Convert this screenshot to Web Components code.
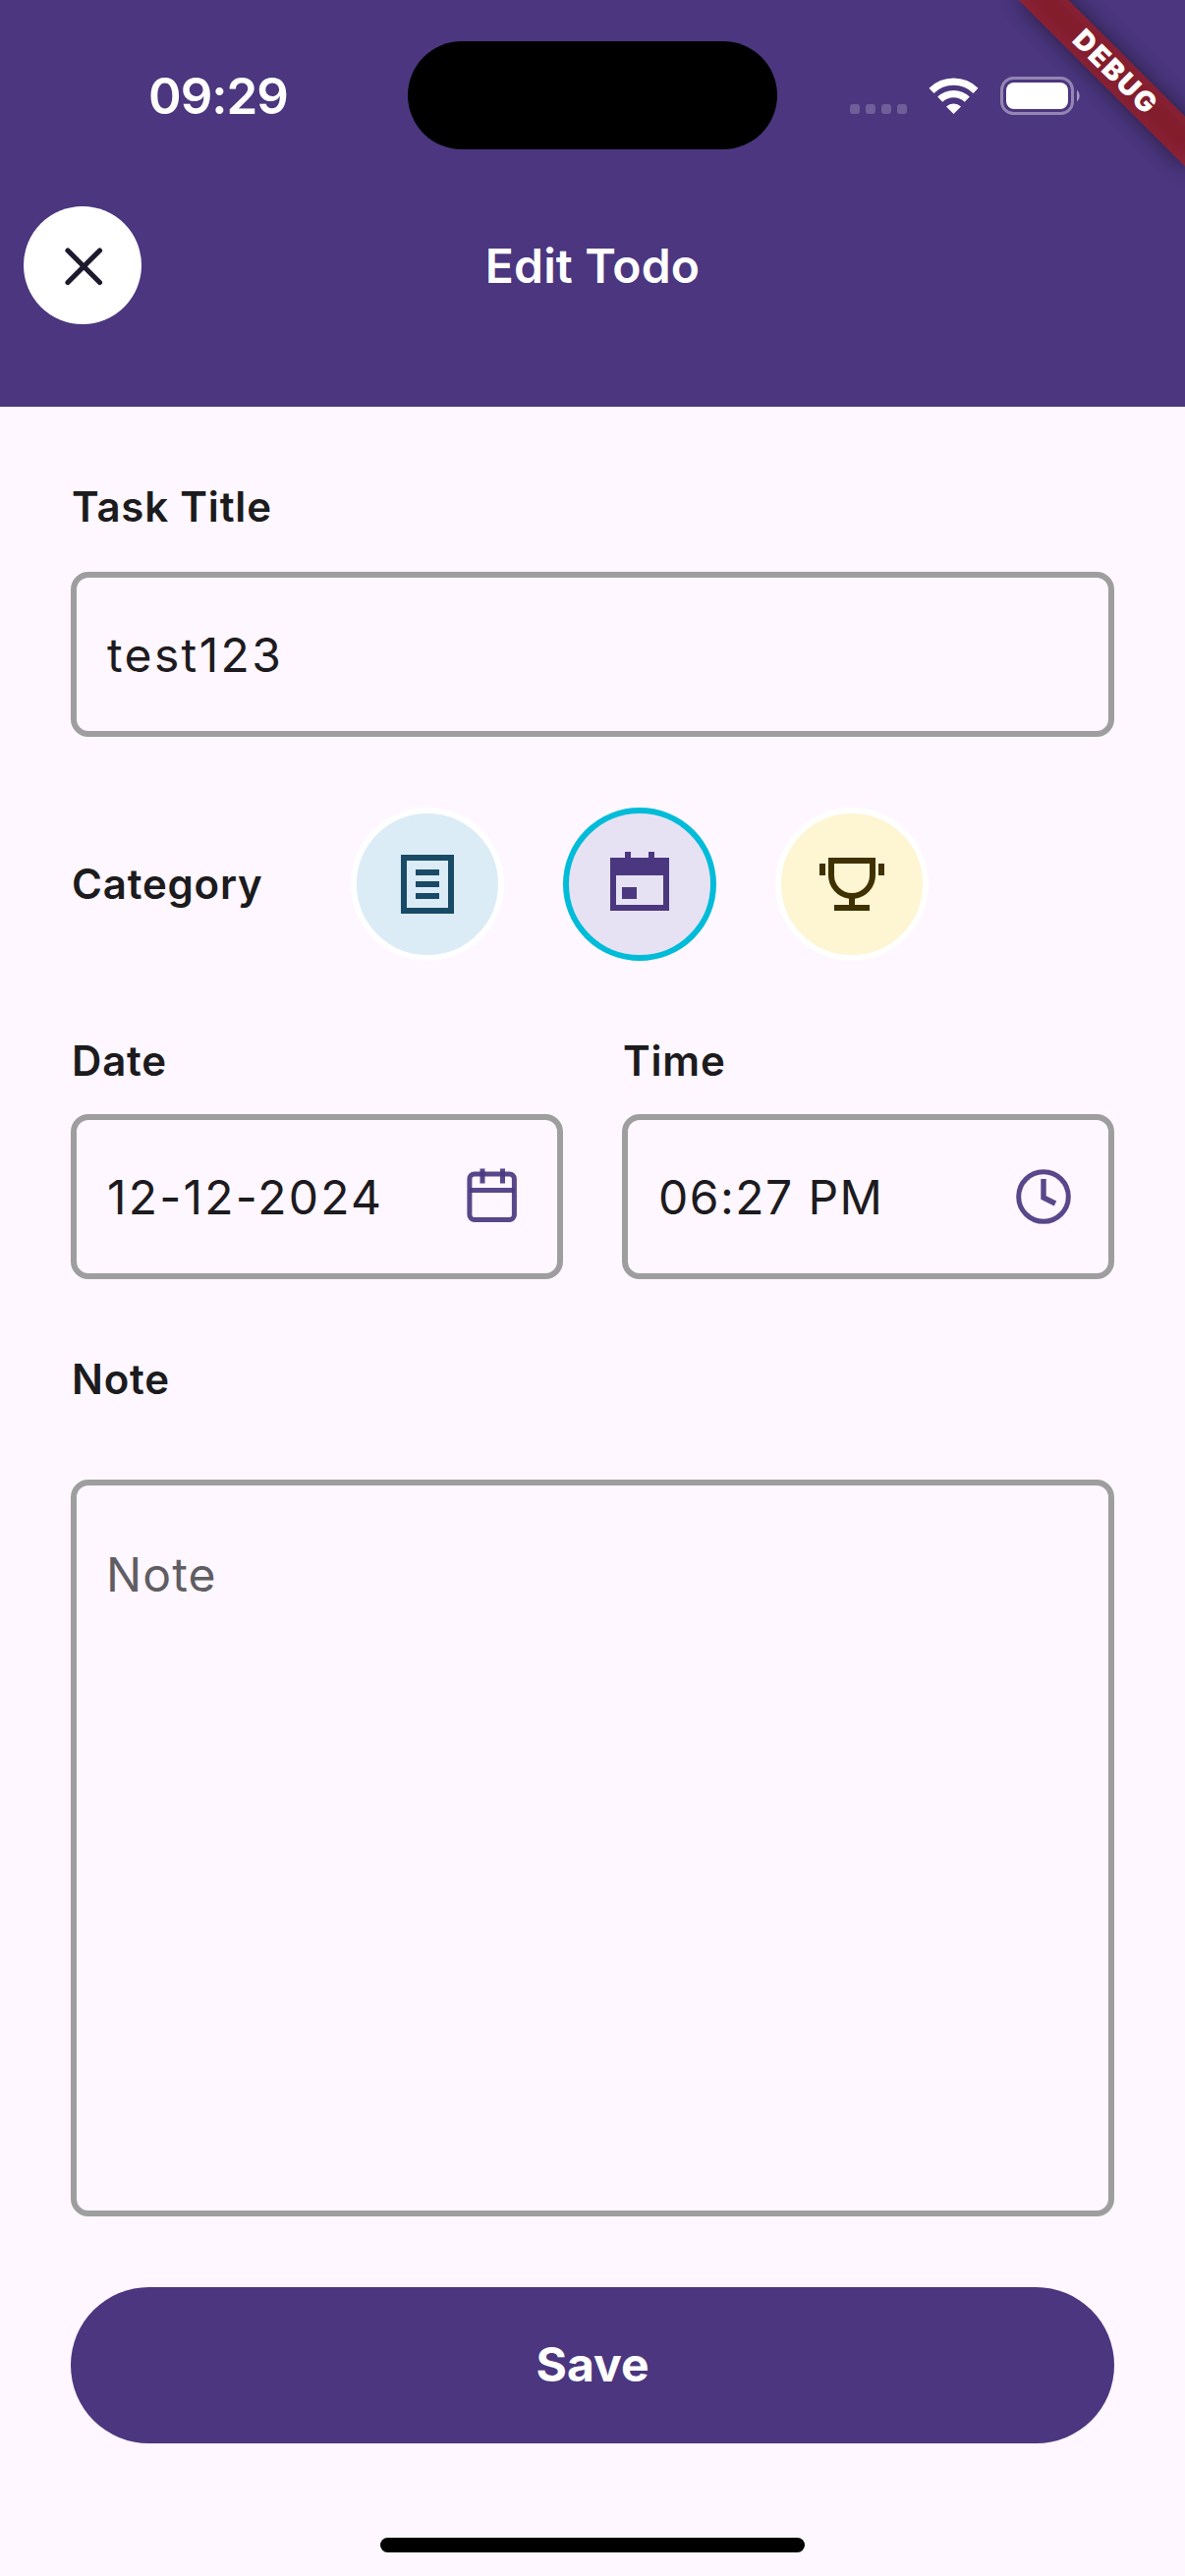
<!DOCTYPE html>
<html lang="en">
<head>
<meta charset="utf-8">
<title>Edit Todo</title>
<style>
  html, body { margin: 0; padding: 0; }
  body { width: 1206px; height: 2622px; overflow: hidden; background: #fef7ff; font-family: Inter, Roboto, sans-serif; }
</style>
</head>
<body>
<edit-todo-screen>
  <app-header slot="header">Edit Todo</app-header>
  <form-field label="Task Title" style="--gap:36px;--track:2.350px">test123</form-field>
  <category-picker label="Category">
    <category-chip style="--fill:#dbecf6;--ink:#194a66">
      <svg width="72" height="72" viewBox="0 0 72 72" fill="currentColor"><path fill-rule="evenodd" d="M9 6h54v60H9zM15 12v48h42V12z"/><path d="M24 21h24v6H24zM24 33h24v6H24zM24 45h24v6H24z"/></svg>
    </category-chip>
    <category-chip style="--fill:#e7e2f3;--ink:#4a3780;--ring:#00bcd9">
      <svg width="72" height="72" viewBox="0 0 72 72" fill="currentColor"><path fill-rule="evenodd" d="M21 3h6v6h18V3h6v6h15v54H6V9h15zM12 27v30h48V27z"/><path d="M18 39h15v12H18z"/></svg>
    </category-chip>
    <category-chip style="--fill:#fef5d3;--ink:#403100">
      <svg width="72" height="72" viewBox="0 0 72 72" fill="currentColor"><path fill-rule="evenodd" d="M12 9h48v18a24 24 0 0 1-21 23.800V57h15v6H18v-6h15v-6.200A24 24 0 0 1 12 27zM18 15v12a18 18 0 0 0 36 0V15z"/><path d="M3 15h6v12H3zM63 15h6v12h-6z"/></svg>
    </category-chip>
  </category-picker>
  <field-row>
    <form-field label="Date" style="--gap:24px;--track:2.200px">12-12-2024
      <svg slot="icon" width="72" height="72" viewBox="0 0 72 72" fill="none" stroke="#4a3780" stroke-opacity=".92" stroke-width="5"><rect x="12.900" y="12.900" width="45.500" height="46.500" rx="5"/><path d="M13 29.500h45.500M26 7.500v15M46.500 7.500v15"/></svg>
    </form-field>
    <form-field label="Time" style="--gap:24px">06:27 PM
      <svg slot="icon" width="72" height="72" viewBox="0 0 72 72" fill="none" stroke="#4a3780" stroke-opacity=".92" stroke-width="5"><circle cx="36" cy="36" r="25.300"/><path d="M36 18v19l12 6" stroke-width="5.400"/></svg>
    </form-field>
  </field-row>
  <form-field label="Note" multiline style="--gap:72px;--value:#605d63;--track:1.100px">Note</form-field>
  <save-button>Save</save-button>
</edit-todo-screen>
<script>
const define = (name, html) => customElements.define(name, class extends HTMLElement {
  connectedCallback() {
    if (this.shadowRoot) return;
    this.attachShadow({ mode: 'open' }).innerHTML = html;
    const label = this.shadowRoot.querySelector('[data-label]');
    if (label) label.textContent = this.getAttribute('label');
  }
});

define('edit-todo-screen', `
  <style>
    :host { display: flex; flex-direction: column; position: relative; width: 1206px; height: 2622px; overflow: hidden; background: #fef7ff; }
    main { display: flex; flex-direction: column; padding: 72px 72px 0; }
    .home { width: 432px; height: 15px; border-radius: 7.5px; background: #000; align-self: center; margin-top: 96px; }
  </style>
  <slot name="header"></slot>
  <main><slot></slot></main>
  <div class="home"></div>
  <debug-banner>DEBUG</debug-banner>`);

define('app-header', `
  <style>
    :host { display: flex; flex-direction: column; height: 414px; background: #4b367f; color: #fff; }
    .bar { display: grid; grid-template-columns: 1fr auto 1fr; align-items: center; height: 120px; margin-top: 16px; padding: 0 24px; }
    .close { width: 120px; height: 120px; border-radius: 50%; background: #fff; display: flex; align-items: center; justify-content: center; }
    h1 { margin: 0; font-size: 48px; line-height: 60px; font-weight: 600; letter-spacing: 0.15px; padding-top: 2px; }
  </style>
  <status-bar></status-bar>
  <div class="bar">
    <div class="close"><svg width="72" height="72" viewBox="0 0 72 72" fill="none" stroke="#1c1b2e" stroke-width="5.200" stroke-linecap="round"><path d="M21 21l32.500 32.500M53.500 21l-32.500 32.500"/></svg></div>
    <h1><slot></slot></h1>
  </div>`);

define('status-bar', `
  <style>
    :host { display: grid; grid-template-columns: 415px 376px 1fr; align-items: center; height: 194px; }
    .time { text-align: center; padding: 2px 0 0 29px; font-size: 51px; line-height: 60px; font-weight: 600; letter-spacing: -1px; }
    .island { height: 110px; border-radius: 55px; background: #000; }
    .icons { display: flex; padding-left: 74px; padding-top: 1px; }
  </style>
  <div class="time">09:29</div>
  <div class="island"></div>
  <div class="icons">
    <svg width="236" height="42" viewBox="0 0 236 42">
      <g fill="#fff" fill-opacity=".2"><rect y="29" width="10" height="10" rx="3"/><rect x="16" y="29" width="10" height="10" rx="3"/><rect x="32" y="29" width="10" height="10" rx="3"/><rect x="48" y="29" width="10" height="10" rx="3"/></g>
      <g fill="none" stroke="#fff" stroke-width="7.200"><path d="M83 15.300a32.400 32.400 0 0 1 45 0"/><path d="M91.700 24.200a19.800 19.800 0 0 1 27.600 0"/></g>
      <path fill="#fff" d="M98 31.500a11 11 0 0 1 15 0l-7.500 7.500z"/>
      <rect x="154.500" y="2.500" width="72" height="36" rx="12" fill="none" stroke="#fff" stroke-opacity=".4" stroke-width="3"/>
      <rect x="159" y="7" width="63" height="27" rx="8" fill="#fff"/>
      <path d="M231 14.500a8 8 0 0 1 0 12z" fill="#fff" fill-opacity=".5"/>
    </svg>
  </div>`);

define('form-field', `
  <style>
    :host { display: flex; flex-direction: column; color: #1d1b20; }
    .label { font-size: 42px; line-height: 60px; font-weight: 600; letter-spacing: 0.8px; color: #1c1b1d; margin-bottom: var(--gap); padding-left: 1px; }
    .box { box-sizing: border-box; height: 168px; border: 6px solid #9e9e9e; border-radius: 18px; padding: 0 30px; display: flex; align-items: center; justify-content: space-between; }
    .value { font-size: 48px; line-height: 60px; letter-spacing: var(--track, 1.450px); color: var(--value, #1d1b20); padding: 2px 0 0 1px; }
    :host([multiline]) .box { height: 750px; align-items: flex-start; padding-top: 59px; }
    :host([multiline]) .value { padding-left: 0; }
  </style>
  <div class="label" data-label></div>
  <div class="box"><div class="value"><slot></slot></div><slot name="icon"></slot></div>`);

define('category-picker', `
  <style>
    :host { display: flex; align-items: center; gap: 60px; height: 156px; margin: 72px 0; }
    .label { box-sizing: border-box; width: 225.4px; padding-left: 1px; font-size: 42px; line-height: 60px; font-weight: 600; letter-spacing: 0.8px; color: #1c1b1d; }
  </style>
  <div class="label" data-label></div>
  <slot></slot>`);

define('category-chip', `
  <style>
    :host { box-sizing: border-box; flex: none; width: 156px; height: 156px; border-radius: 50%; border: 6px solid var(--ring, #fff); background: var(--fill); color: var(--ink); display: flex; align-items: center; justify-content: center; }
  </style>
  <slot></slot>`);

define('field-row', `
  <style>
    :host { display: grid; grid-template-columns: 1fr 1fr; gap: 60px; margin-bottom: 72px; }
  </style>
  <slot></slot>`);

define('save-button', `
  <style>
    :host { box-sizing: border-box; display: flex; align-items: center; justify-content: center; height: 159px; padding-bottom: 2px; margin-top: 72px; border-radius: 79.5px; background: #4b367f; color: #fff; font-size: 48px; font-weight: 700; line-height: 60px; }
  </style>
  <slot></slot>`);

define('debug-banner', `
  <style>
    :host { position: absolute; left: 1013.9px; top: 54.1px; width: 240px; height: 36px; transform: rotate(45deg); }
    div { position: absolute; inset: 0; }
    .shadow { background: rgba(0,0,0,.5); filter: blur(11.9px); }
    .ribbon { background: rgba(183,28,28,.627); color: #fff; display: flex; align-items: center; justify-content: center; font-size: 28.5px; line-height: 36px; font-weight: 900; letter-spacing: 1.9px; padding-left: 4px; }
  </style>
  <div class="shadow"></div>
  <div class="ribbon"><slot></slot></div>`);
</script>
</body>
</html>
